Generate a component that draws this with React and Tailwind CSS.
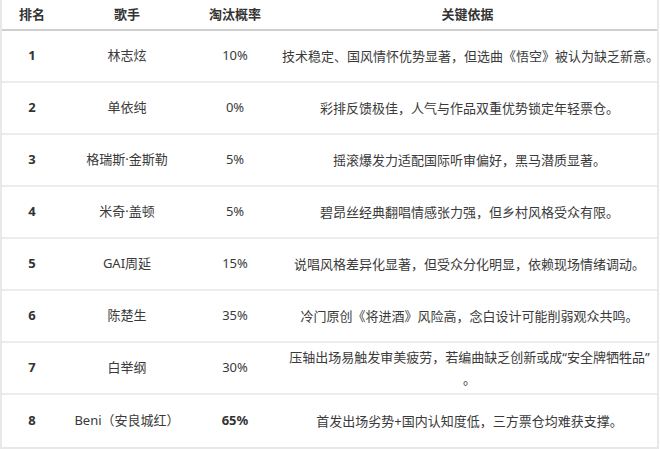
import React from "react";

const rows = [
  ["1", "林志炫", "10%", "技术稳定、国风情怀优势显著，但选曲《悟空》被认为缺乏新意。"],
  ["2", "单依纯", "0%", "彩排反馈极佳，人气与作品双重优势锁定年轻票仓。"],
  ["3", "格瑞斯·金斯勒", "5%", "摇滚爆发力适配国际听审偏好，黑马潜质显著。"],
  ["4", "米奇·盖顿", "5%", "碧昂丝经典翻唱情感张力强，但乡村风格受众有限。"],
  ["5", "GAI周延", "15%", "说唱风格差异化显著，但受众分化明显，依赖现场情绪调动。"],
  ["6", "陈楚生", "35%", "冷门原创《将进酒》风险高，念白设计可能削弱观众共鸣。"],
  ["7", "白举纲", "30%", "wrap"],
  ["8", "Beni（安良城红）", "65%", "首发出场劣势+国内认知度低，三方票仓均难获支撑。"],
];

export default function App() {
  return (
    <div
      className="w-[660px] h-[449px] bg-white text-[13px] text-[#3a3a3a] overflow-hidden"
      style={{ fontFamily: '"Noto Sans", "Noto Sans CJK SC", sans-serif' }}
    >
      <div className="w-[659px] border-x-2 border-b-2 border-[#e8e8e8]">
        <div className="grid grid-cols-[60px_130px_86px_1fr] h-[31px] items-center border-b-2 border-[#cfcfcf] font-bold text-[#333]">
          <div className="text-center">排名</div>
          <div className="text-center">歌手</div>
          <div className="text-center">淘汰概率</div>
          <div className="text-center">关键依据</div>
        </div>
        {rows.map((r, i) => (
          <div
            key={r[0]}
            className={
              "grid grid-cols-[60px_130px_86px_1fr] h-[52px] items-center " +
              (i < rows.length - 1 ? "border-b-2 border-[#ececec]" : "")
            }
          >
            <div className="text-center font-bold text-[#333]">{r[0]}</div>
            <div className="text-center">{r[1]}</div>
            <div className={"text-center " + (r[0] === "8" ? "font-bold text-[#333]" : "")}>{r[2]}</div>
            <div className="text-center leading-[22px] whitespace-nowrap pl-[4px]">
              {r[3] === "wrap" ? (
                <>
                  压轴出场易触发审美疲劳，若编曲缺乏创新或成“安全牌牺牲品”
                  <br />。
                </>
              ) : (
                r[3]
              )}
            </div>
          </div>
        ))}
      </div>
    </div>
  );
}
